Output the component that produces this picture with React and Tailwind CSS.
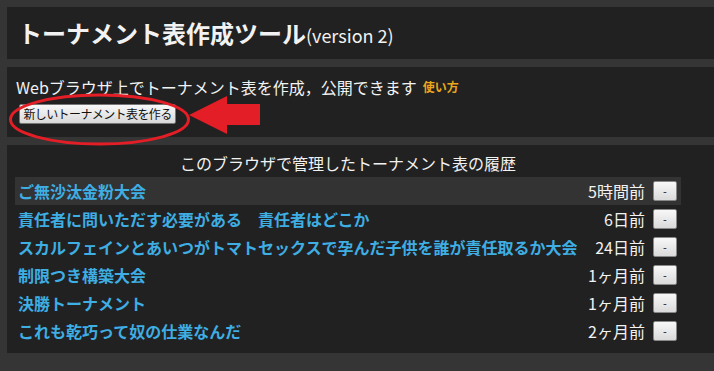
const history = [
  { name: "ご無沙汰金粉大会", ago: "5時間前", active: true },
  { name: "責任者に問いただす必要がある　責任者はどこか", ago: "6日前" },
  { name: "スカルフェインとあいつがトマトセックスで孕んだ子供を誰が責任取るか大会", ago: "24日前" },
  { name: "制限つき構築大会", ago: "1ヶ月前" },
  { name: "決勝トーナメント", ago: "1ヶ月前" },
  { name: "これも乾巧って奴の仕業なんだ", ago: "2ヶ月前" },
];

const App = () => {
  return (
    <div
      className="relative min-h-screen bg-[#353535] pl-[7px] pt-[7px] flex flex-col gap-[8px] text-[#f2f2f2]"
      style={{ fontFamily: '"Noto Sans CJK JP", "Noto Sans", sans-serif' }}
    >
      {/* Title */}
      <div className="bg-[#212121] h-[52px] flex items-center pl-[11px]">
        <h1 className="text-[24px] font-bold leading-none">トーナメント表作成ツール</h1>
        <span className="text-[18px] leading-none mt-[3px]">(version 2)</span>
      </div>

      {/* Intro */}
      <div className="bg-[#212121] h-[70px] pl-[9px] pt-[8px]">
        <div className="flex items-center h-[24px]">
          <span className="text-[16px]">Webブラウザ上でトーナメント表を作成，公開できます</span>
          <a className="ml-[6px] text-[12px] font-bold text-[#e8a71c]">使い方</a>
        </div>
        <button className="mt-[5px] ml-[3px] w-[157px] h-[20px] text-[12px] tracking-[-0.6px] text-[#111] leading-none border border-[#777] rounded-[2px] bg-gradient-to-b from-[#f8f8f8] to-[#d9d9d9]">
          新しいトーナメント表を作る
        </button>
      </div>

      {/* History */}
      <div className="bg-[#212121] h-[208px] pl-[8px] pt-[6px]">
        <div className="w-[666px] text-center text-[16px] h-[24px] leading-[24px] mb-[2px]">
          このブラウザで管理したトーナメント表の履歴
        </div>
        <div className="w-[666px]">
          {history.map((h, i) => (
            <div
              key={i}
              className={
                "h-[28px] flex items-center pl-[3px] pr-[4px] " +
                (h.active ? "bg-[#333333]" : "")
              }
            >
              <a className="flex-1 text-[16px] font-bold text-[#3eaee3] whitespace-nowrap">{h.name}</a>
              <span className="ml-[12px] text-[16px]">{h.ago}</span>
              <button className="ml-[8px] w-[24px] h-[20px] text-[11px] text-[#111] leading-none border border-[#888] rounded-[2px] bg-gradient-to-b from-[#f8f8f8] to-[#dadada]">
                -
              </button>
            </div>
          ))}
        </div>
      </div>

      {/* Red annotation */}
      <svg className="absolute left-0 top-0 pointer-events-none" width="714" height="371">
        <ellipse cx="99.5" cy="119.5" rx="89" ry="24.5" fill="none" stroke="#e31e26" strokeWidth="3" />
        <polygon points="189,115 227,96 227,104 260,104 260,125 227,125 227,134" fill="#e31e26" />
      </svg>
    </div>
  );
};

export default App;
